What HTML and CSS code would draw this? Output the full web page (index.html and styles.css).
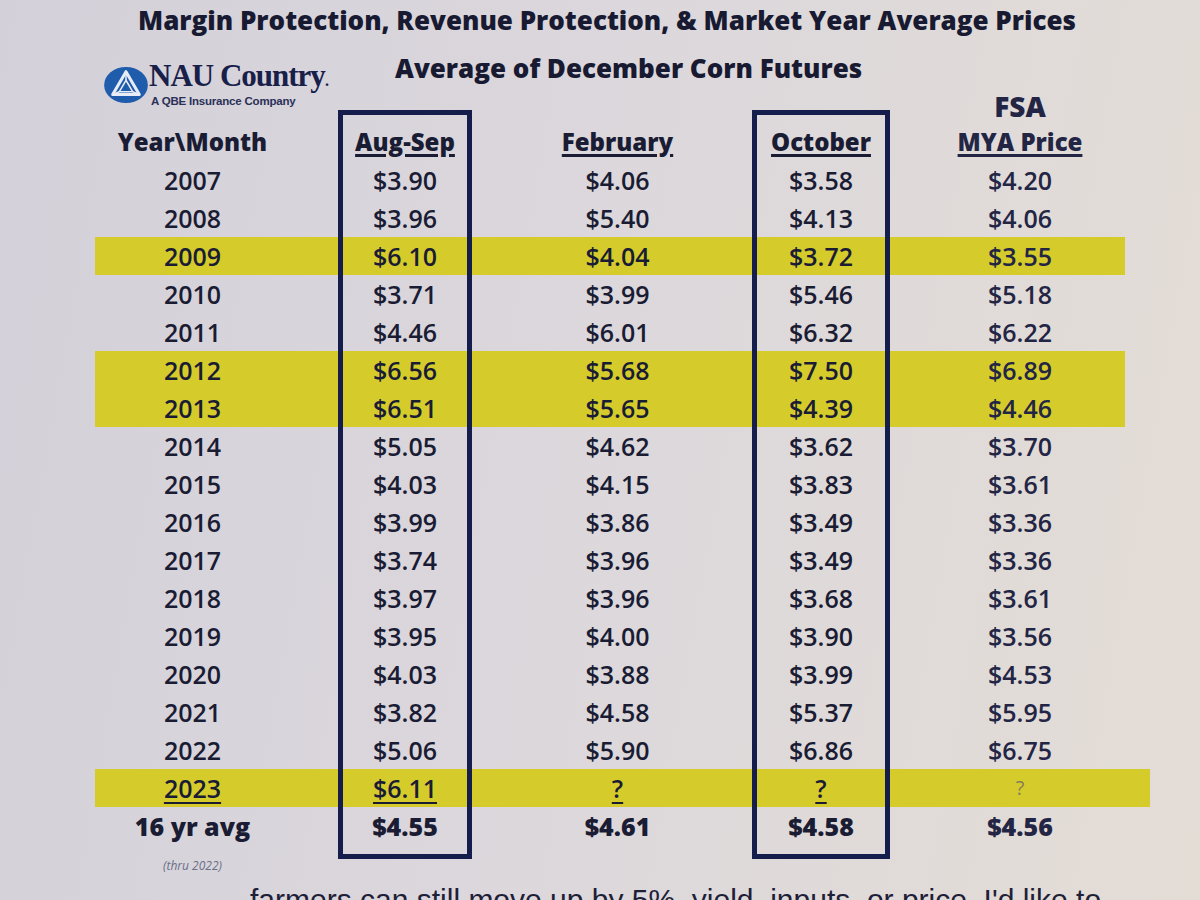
FILE: index.html
```html
<!DOCTYPE html>
<html lang="en">
<head>
<meta charset="utf-8">
<title>Average of December Corn Futures</title>
<link rel="stylesheet" href="styles.css">
</head>
<body>
<div class="page">
  <h1 class="title">Margin Protection, Revenue Protection, &amp; Market Year Average Prices</h1>
  <div class="subhead">
    <div class="logo">
      <svg class="logo-mark" viewBox="0 0 48 40" width="46" height="38" aria-hidden="true">
        <ellipse cx="24" cy="20" rx="23" ry="19" fill="#1f5cab"/>
        <path d="M24 6 L38 30 L10 30 Z" fill="none" stroke="#e8ecf6" stroke-width="3.2" stroke-linejoin="round"/>
        <path d="M24 15 L31 27 L17 27 Z" fill="#1f5cab" stroke="#e8ecf6" stroke-width="1.6"/>
        <path d="M24 6 L24 15 M38 30 L31 27 M10 30 L17 27" stroke="#e8ecf6" stroke-width="1.6"/>
      </svg>
      <div class="logo-text">
        <div class="logo-name">NAU Country<span class="tm">.</span></div>
        <div class="logo-tag">A QBE Insurance Company</div>
      </div>
    </div>
    <h2 class="subtitle">Average of December Corn Futures</h2>
  </div>

  <div class="table">
    <div class="row head">
      <div class="c year"><span class="hl">Year\Month</span></div>
      <div class="c aug box box-top"><span class="hl u">Aug-Sep</span></div>
      <div class="c feb"><span class="hl u">February</span></div>
      <div class="c oct box box-top"><span class="hl u">October</span></div>
      <div class="c fsa"><span class="hl big">FSA</span><span class="hl u">MYA Price</span></div>
    </div>
    <div class="row"><div class="c year">2007</div><div class="c aug box">$3.90</div><div class="c feb">$4.06</div><div class="c oct box">$3.58</div><div class="c fsa">$4.20</div></div>
    <div class="row"><div class="c year">2008</div><div class="c aug box">$3.96</div><div class="c feb">$5.40</div><div class="c oct box">$4.13</div><div class="c fsa">$4.06</div></div>
    <div class="row yellow"><div class="c year">2009</div><div class="c aug box">$6.10</div><div class="c feb">$4.04</div><div class="c oct box">$3.72</div><div class="c fsa">$3.55</div></div>
    <div class="row"><div class="c year">2010</div><div class="c aug box">$3.71</div><div class="c feb">$3.99</div><div class="c oct box">$5.46</div><div class="c fsa">$5.18</div></div>
    <div class="row"><div class="c year">2011</div><div class="c aug box">$4.46</div><div class="c feb">$6.01</div><div class="c oct box">$6.32</div><div class="c fsa">$6.22</div></div>
    <div class="row yellow"><div class="c year">2012</div><div class="c aug box">$6.56</div><div class="c feb">$5.68</div><div class="c oct box">$7.50</div><div class="c fsa">$6.89</div></div>
    <div class="row yellow"><div class="c year">2013</div><div class="c aug box">$6.51</div><div class="c feb">$5.65</div><div class="c oct box">$4.39</div><div class="c fsa">$4.46</div></div>
    <div class="row"><div class="c year">2014</div><div class="c aug box">$5.05</div><div class="c feb">$4.62</div><div class="c oct box">$3.62</div><div class="c fsa">$3.70</div></div>
    <div class="row"><div class="c year">2015</div><div class="c aug box">$4.03</div><div class="c feb">$4.15</div><div class="c oct box">$3.83</div><div class="c fsa">$3.61</div></div>
    <div class="row"><div class="c year">2016</div><div class="c aug box">$3.99</div><div class="c feb">$3.86</div><div class="c oct box">$3.49</div><div class="c fsa">$3.36</div></div>
    <div class="row"><div class="c year">2017</div><div class="c aug box">$3.74</div><div class="c feb">$3.96</div><div class="c oct box">$3.49</div><div class="c fsa">$3.36</div></div>
    <div class="row"><div class="c year">2018</div><div class="c aug box">$3.97</div><div class="c feb">$3.96</div><div class="c oct box">$3.68</div><div class="c fsa">$3.61</div></div>
    <div class="row"><div class="c year">2019</div><div class="c aug box">$3.95</div><div class="c feb">$4.00</div><div class="c oct box">$3.90</div><div class="c fsa">$3.56</div></div>
    <div class="row"><div class="c year">2020</div><div class="c aug box">$4.03</div><div class="c feb">$3.88</div><div class="c oct box">$3.99</div><div class="c fsa">$4.53</div></div>
    <div class="row"><div class="c year">2021</div><div class="c aug box">$3.82</div><div class="c feb">$4.58</div><div class="c oct box">$5.37</div><div class="c fsa">$5.95</div></div>
    <div class="row"><div class="c year">2022</div><div class="c aug box">$5.06</div><div class="c feb">$5.90</div><div class="c oct box">$6.86</div><div class="c fsa">$6.75</div></div>
    <div class="row yellow wide"><div class="c year"><span class="ul">2023</span></div><div class="c aug box"><span class="ul">$6.11</span></div><div class="c feb"><span class="ul">?</span></div><div class="c oct box"><span class="ul">?</span></div><div class="c fsa faint">?</div></div>
    <div class="row avg"><div class="c year">16 yr avg</div><div class="c aug box box-bottom">$4.55</div><div class="c feb">$4.61</div><div class="c oct box box-bottom">$4.58</div><div class="c fsa">$4.56</div></div>
  </div>
  <div class="note">(thru 2022)</div>
  <p class="cut">farmers can still move up by 5%, yield, inputs, or price. I'd like to</p>
</div>
</body>
</html>
```

FILE: styles.css
```css
html, body {
  margin: 0;
  padding: 0;
}
body {
  width: 1200px;
  height: 900px;
  overflow: hidden;
  background: linear-gradient(100deg, #d3d0d9 0%, #dbd7dc 45%, #e4ddd6 100%);
  color: #1a1c34;
  font-family: "Open Sans", "Liberation Sans", sans-serif;
}
.page {
  width: 1200px;
  height: 900px;
}
.title {
  margin: 0;
  height: 40px;
  line-height: 40px;
  font-size: 26px;
  font-weight: 800;
  text-align: center;
  padding-left: 14px;
  color: #181a32;
}
.subhead {
  height: 48px;
  display: flex;
  align-items: flex-start;
  padding-left: 103px;
  gap: 60px;
}
.subtitle {
  margin: 0;
  padding-top: 8px;
  line-height: 40px;
  font-size: 26px;
  font-weight: 800;
  color: #181a32;
}
.logo {
  margin-top: 22px;
  display: flex;
  align-items: center;
  gap: 0;
  width: 232px;
}
.logo-mark {
  flex: none;
}
.logo-text {
  display: flex;
  flex-direction: column;
}
.logo-name {
  font-family: "Liberation Serif", "DejaVu Serif", serif;
  font-weight: 700;
  font-size: 31px;
  line-height: 28px;
  letter-spacing: -1px;
  color: #18204a;
}
.logo-name .tm {
  font-size: 16px;
}
.logo-tag {
  font-family: "Liberation Sans", sans-serif;
  font-size: 11.5px;
  font-weight: 700;
  line-height: 13px;
  color: #2a3058;
  padding-left: 2px;
  letter-spacing: -0.2px;
}

.table {
  margin-left: 95px;
  width: 1030px;
}
.row {
  display: grid;
  grid-template-columns: 195px 48px 134px 68px 155px 57px 138px 60px 140px 35px;
  height: 38px;
  font-size: 25px;
  font-weight: 600;
}
.row.yellow {
  background: #d5cc2c;
}
.row.wide {
  width: 1055px;
}
.c {
  display: flex;
  align-items: center;
  justify-content: center;
  box-sizing: border-box;
  line-height: 38px;
}
.year { grid-column: 1; }
.aug { grid-column: 3; }
.feb { grid-column: 5; }
.oct { grid-column: 7; }
.fsa { grid-column: 9; color: #232545; }
.box {
  border-left: 5px solid #141d4c;
  border-right: 5px solid #141d4c;
}
.row.head {
  height: 73px;
}
.row.head .c {
  flex-direction: column;
  justify-content: flex-end;
  line-height: 36px;
  padding-bottom: 1px;
}
.box-top {
  margin-top: 22px;
  border-top: 5px solid #141d4c;
}
.hl {
  font-size: 24px;
  font-weight: 800;
  line-height: 36px;
  white-space: nowrap;
}
.hl.big {
  font-size: 28px;
}
.hl.u {
  text-decoration: underline;
  text-decoration-thickness: 3px;
  text-underline-offset: 3px;
}
.ul {
  text-decoration: underline;
  text-decoration-thickness: 2px;
  text-underline-offset: 4px;
}
.faint {
  color: #8a7c58;
  font-size: 20px;
  font-weight: 500;
}
.row.avg {
  height: 52px;
  font-weight: 800;
}
.row.avg .c {
  align-items: flex-start;
}
.box-bottom {
  border-bottom: 5px solid #141d4c;
}
.note {
  margin-left: 95px;
  width: 195px;
  text-align: center;
  font-size: 12px;
  font-style: italic;
  color: #6a6e88;
  line-height: 14px;
}
.cut {
  margin: 10px 0 0 0;
  padding-left: 250px;
  font-size: 30px;
  line-height: 34px;
  white-space: nowrap;
  color: #1e2038;
  font-family: "Liberation Sans", sans-serif;
}
```
